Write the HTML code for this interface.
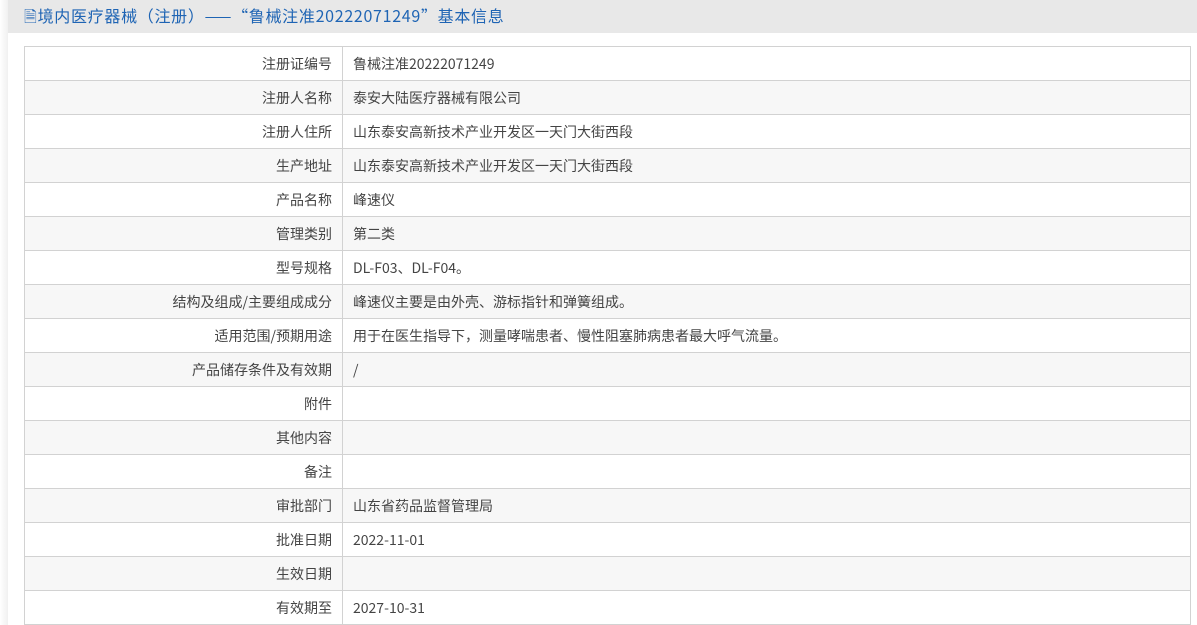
<!DOCTYPE html>
<html><head><meta charset="utf-8"><style>
html,body{margin:0;padding:0;width:1197px;height:625px;overflow:hidden;background:#fff;font-family:"Noto Sans CJK SC","Liberation Sans",sans-serif;}
.side{position:absolute;left:0;top:0;width:8px;height:625px;background:linear-gradient(to right,#fff,#f0f0f0);}
.hd{position:absolute;left:8px;top:0;width:1189px;height:33px;background:#e8e8e8;color:#1e64b4;font-size:16px;line-height:31px;white-space:nowrap;letter-spacing:0.7px;}
.hd span{margin-left:16px;}
table{position:absolute;left:24px;top:46px;width:1167px;border-collapse:collapse;font-size:14px;color:#444;}
td{border:1px solid #d2d2d2;height:33px;padding:0;line-height:20px;}
td.l{width:307px;text-align:right;padding-right:10px;}
td.v{padding-left:10px;}
tr:nth-child(even) td{background:#f7f7f7;}
</style></head><body>
<div class="side"></div>
<div class="hd"><span>🗎境内医疗器械（注册）——“鲁械注准20222071249”基本信息</span></div>
<table>
<tr><td class="l">注册证编号</td><td class="v">鲁械注准20222071249</td></tr>
<tr><td class="l">注册人名称</td><td class="v">泰安大陆医疗器械有限公司</td></tr>
<tr><td class="l">注册人住所</td><td class="v">山东泰安高新技术产业开发区一天门大街西段</td></tr>
<tr><td class="l">生产地址</td><td class="v">山东泰安高新技术产业开发区一天门大街西段</td></tr>
<tr><td class="l">产品名称</td><td class="v">峰速仪</td></tr>
<tr><td class="l">管理类别</td><td class="v">第二类</td></tr>
<tr><td class="l">型号规格</td><td class="v">DL-F03、DL-F04。</td></tr>
<tr><td class="l">结构及组成/主要组成成分</td><td class="v">峰速仪主要是由外壳、游标指针和弹簧组成。</td></tr>
<tr><td class="l">适用范围/预期用途</td><td class="v">用于在医生指导下，测量哮喘患者、慢性阻塞肺病患者最大呼气流量。</td></tr>
<tr><td class="l">产品储存条件及有效期</td><td class="v">/</td></tr>
<tr><td class="l">附件</td><td class="v"></td></tr>
<tr><td class="l">其他内容</td><td class="v"></td></tr>
<tr><td class="l">备注</td><td class="v"></td></tr>
<tr><td class="l">审批部门</td><td class="v">山东省药品监督管理局</td></tr>
<tr><td class="l">批准日期</td><td class="v">2022-11-01</td></tr>
<tr><td class="l">生效日期</td><td class="v"></td></tr>
<tr><td class="l">有效期至</td><td class="v">2027-10-31</td></tr>
</table>
</body></html>
